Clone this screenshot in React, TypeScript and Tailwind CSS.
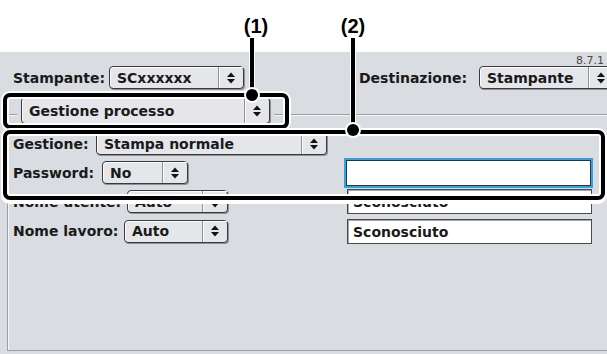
import * as React from "react";

/* ----------------- Mac OS 9 style popup arrows ----------------- */
function Arrows() {
  return (
    <svg width="8" height="12" viewBox="0 0 8 12">
      <path d="M0 5 L4 0.5 L8 5 Z" fill="#111" />
      <path d="M0 7 L8 7 L4 11.5 Z" fill="#111" />
    </svg>
  );
}

function Popup({ text, w, h = "h-[23px]" }: { text: string; w: string; h?: string }) {
  return (
    <div className={`${w} ${h} flex shrink-0 rounded-[4px] border border-[#3a3a3a] bg-[#e4e6e9] shadow-[1px_1px_0_#8d9096,inset_1px_1px_0_#fbfbfc]`}>
      <div className="flex-1 flex items-center pl-[7px] text-[14px] font-bold leading-none text-[#1a1a1a] overflow-hidden whitespace-nowrap">{text}</div>
      <div className="w-[25px] shrink-0 flex items-center justify-center border-l border-[#8f9297] shadow-[inset_1px_1px_0_#fbfbfc]">
        <Arrows />
      </div>
    </div>
  );
}

function Field({ text, focused = false }: { text?: string; focused?: boolean }) {
  return (
    <div className={
      focused
        ? "w-[245px] h-[26px] border border-[#333] bg-white shadow-[0_0_0_2px_#2fa3e6]"
        : "w-[245px] h-[25px] border border-[#4a4a4a] bg-white shadow-[inset_1px_1px_0_#a5a8ad]"
    }>
      {text && <div className="pl-[5px] pt-[5px] text-[14px] font-bold leading-none text-[#1a1a1a]">{text}</div>}
    </div>
  );
}

function Label({ text, w }: { text: string; w: string }) {
  return <div className={`${w} shrink-0 text-[14px] font-bold leading-none text-[#1a1a1a] whitespace-nowrap`}>{text}</div>;
}

export default function App() {
  return (
    <div className="relative w-[607px] h-[354px] overflow-hidden bg-white" style={{ fontFamily: '"DejaVu Sans", sans-serif' }}>
      {/* white margin on top, where the callout numbers sit */}
      <div className="h-[52px]" />

      {/* dialog surface */}
      <div className="h-[302px] bg-[#d9dce1] flex flex-col">
        <div className="h-[14px] pt-[3px] pr-[3px] text-right text-[11px] leading-none text-[#4a4a4a]">8.7.1</div>

        <div className="h-[23px] flex items-center">
          <div className="pl-[13px] flex items-center">
            <Label text="Stampante:" w="w-[96px]" />
            <Popup text="SCxxxxxx" w="w-[135px]" />
          </div>
          <div className="ml-[115px] flex items-center">
            <Label text="Destinazione:" w="w-[120px]" />
            <Popup text="Stampante" w="w-[135px]" />
          </div>
        </div>

        {/* group pane */}
        <div className="mt-[25px] ml-[7px] w-[620px] h-[237px] border-l border-t border-b border-[#9a9ea5] shadow-[inset_1px_1px_0_#f4f5f7]">
          <div className="-mt-[18px] ml-[9px] w-fit px-[4px] bg-[#d9dce1]">
            <Popup text="Gestione processo" w="w-[249px]" h="h-[27px]" />
          </div>

          <div className="mt-[5px] pl-[5px] flex flex-col">
            <div className="h-[29px] flex items-center">
              <Label text="Gestione:" w="w-[83px]" />
              <Popup text="Stampa normale" w="w-[231px]" />
            </div>
            <div className="h-[29px] flex items-center">
              <div className="w-[333px] flex items-center">
                <Label text="Password:" w="w-[89px]" />
                <Popup text="No" w="w-[86px]" />
              </div>
              <Field focused />
            </div>
            <div className="h-[29px] flex items-center">
              <div className="w-[334px] flex items-center">
                <Label text="Nome utente:" w="w-[114px]" />
                <Popup text="Auto" w="w-[101px]" />
              </div>
              <Field text="Sconosciuto" />
            </div>
            <div className="h-[30px] flex items-center">
              <div className="w-[334px] flex items-center">
                <Label text="Nome lavoro:" w="w-[111px]" />
                <Popup text="Auto" w="w-[104px]" />
              </div>
              <Field text="Sconosciuto" />
            </div>
          </div>
        </div>
      </div>

      {/* callout annotations */}
      <div className="absolute left-[242px] top-[16px] w-[28px] text-center text-[20px] font-bold leading-none text-black" style={{ fontFamily: '"Liberation Sans", Arial, sans-serif' }}>(1)</div>
      <div className="absolute left-[338px] top-[16px] w-[30px] text-center text-[20px] font-bold leading-none text-black" style={{ fontFamily: '"Liberation Sans", Arial, sans-serif' }}>(2)</div>

      <div className="absolute left-[3px] top-[93px] w-[286px] h-[36px] rounded-[7px] border-[4px] border-black shadow-[0_0_0_2px_#fff,inset_0_0_0_2px_#fff]" />
      <div className="absolute left-[3px] top-[130px] w-[602px] h-[70px] rounded-[7px] border-[4px] border-black shadow-[0_0_0_2px_#fff,0_2px_0_2px_#fff,inset_0_0_0_2px_#fff]" />

      <div className="absolute left-[250px] top-[38px] w-[4px] h-[56px] bg-black shadow-[0_0_0_1px_#fff]" />
      <div className="absolute left-[246px] top-[89px] w-[12px] h-[12px] rounded-full bg-black shadow-[0_0_0_2px_#fff]" />
      <div className="absolute left-[351px] top-[38px] w-[4px] h-[91px] bg-black shadow-[0_0_0_1px_#fff]" />
      <div className="absolute left-[347px] top-[124px] w-[12px] h-[12px] rounded-full bg-black shadow-[0_0_0_2px_#fff]" />
    </div>
  );
}
